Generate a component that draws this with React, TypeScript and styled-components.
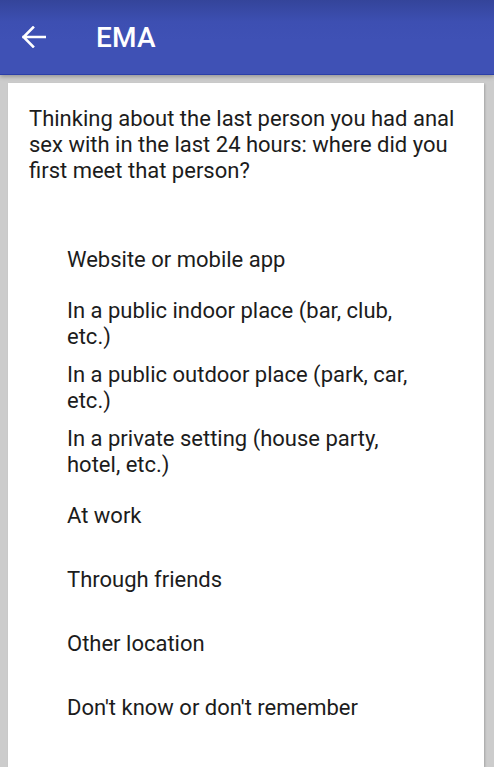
import React from "react";
import styled, { createGlobalStyle } from "styled-components";

const Global = createGlobalStyle`
  html, body { margin: 0; padding: 0; background: #cccccc; }
  body { font-family: Roboto, "Noto Sans", sans-serif; }
`;

const Page = styled.div`
  width: 494px;
  height: 767px;
  display: flex;
  flex-direction: column;
  background: #cccccc;
  overflow: hidden;
`;

const Toolbar = styled.header`
  height: 74px;
  flex: none;
  display: flex;
  align-items: center;
  background: linear-gradient(to bottom, #34449a 0px, #3d4fb2 22px, #3f51b5 40px);
  border-bottom: 1px solid #2b3ea8;
  box-shadow: 0 2px 4px rgba(0, 0, 0, 0.25);
  position: relative;
  z-index: 1;
`;

const BackButton = styled.button`
  width: 68px;
  height: 74px;
  padding: 0 0 0 22px;
  border: 0;
  background: transparent;
  display: flex;
  align-items: center;
  flex: none;
`;

const Title = styled.h1`
  margin: 0 0 0 28px;
  color: #ffffff;
  font-family: Roboto, sans-serif;
  font-weight: 500;
  font-size: 28px;
  letter-spacing: 0.2px;
`;

const Body = styled.main`
  flex: 1;
  padding: 8px 10px 0 8px;
  display: flex;
`;

const Card = styled.section`
  flex: 1;
  background: #ffffff;
  box-shadow: 1px 1px 2px rgba(0, 0, 0, 0.2);
  padding: 23px 20px 0 21px;
  display: flex;
  flex-direction: column;
`;

const Question = styled.p`
  margin: 0;
  font-size: 22px;
  line-height: 26px;
  color: #1c1c1c;
`;

const Options = styled.ul`
  list-style: none;
  margin: 44px 0 0 0;
  padding: 0 0 0 38px;
  display: flex;
  flex-direction: column;
`;

const Option = styled.li`
  height: 64px;
  display: flex;
  align-items: center;
  max-width: 364px;
  font-size: 22px;
  line-height: 26px;
  color: #1c1c1c;
`;

const options = [
  "Website or mobile app",
  "In a public indoor place (bar, club, etc.)",
  "In a public outdoor place (park, car, etc.)",
  "In a private setting (house party, hotel, etc.)",
  "At work",
  "Through friends",
  "Other location",
  "Don't know or don't remember",
];

export default function App() {
  return (
    <Page>
      <Global />
      <Toolbar>
        <BackButton aria-label="Back">
          <svg width="24" height="22" viewBox="0 0 24 22" fill="none">
            <path
              d="M1.5 11H23M11 1.5L1.5 11L11 20.5"
              stroke="#ffffff"
              strokeWidth="2.6"
              strokeLinecap="square"
            />
          </svg>
        </BackButton>
        <Title>EMA</Title>
      </Toolbar>
      <Body>
        <Card>
          <Question>
            Thinking about the last person you had anal sex with in the last 24 hours: where did you
            first meet that person?
          </Question>
          <Options>
            {options.map((o) => (
              <Option key={o}>{o}</Option>
            ))}
          </Options>
        </Card>
      </Body>
    </Page>
  );
}
